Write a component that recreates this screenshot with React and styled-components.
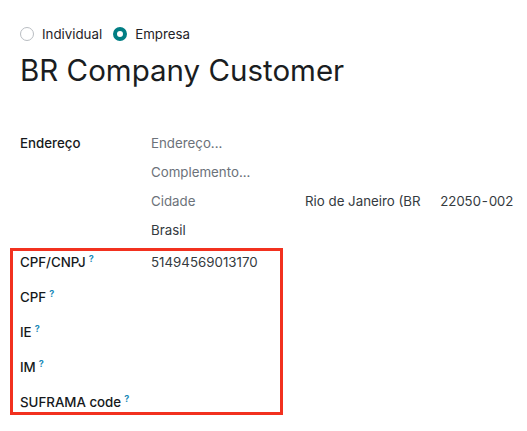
import React from "react";
import styled, { createGlobalStyle } from "styled-components";

const Global = createGlobalStyle`
  html, body { margin: 0; padding: 0; background: #fff; }
  body {
    font-family: "Inter Variable", "Inter", "Noto Sans", sans-serif;
    font-size: 13.3px;
    color: #1f2328;
  }
`;

const Page = styled.div`
  padding: 24px 0 0 20px;
  width: 507px;
  box-sizing: border-box;
`;

const RadioGroup = styled.div`
  display: flex;
  align-items: center;
  height: 20px;
  line-height: 20px;
  gap: 11px;
`;

const RadioOption = styled.label`
  display: flex;
  align-items: center;
  gap: 8px;
  color: #1f2328;
`;

const RadioDot = styled.span`
  width: 14px;
  height: 14px;
  border-radius: 50%;
  box-sizing: border-box;
  display: inline-block;
  border: ${(p) => (p.$checked ? "4px solid #017e84" : "1px solid #b9bdc2")};
  background: #fff;
  margin-top: -1px;
`;

const Title = styled.h1`
  margin: 9px 0 0;
  font-size: 29.5px;
  line-height: 34px;
  font-weight: 400;
  color: #1a1d21;
`;

const AddressGrid = styled.div`
  margin-top: 42px;
  display: grid;
  grid-template-columns: 131px 154px 135px 1fr;
  grid-auto-rows: 29px;
  line-height: 29px;
`;

const Label = styled.div`
  font-weight: 460;
  color: #16191c;
  white-space: nowrap;
`;

const Value = styled.div`
  grid-column: ${(p) => p.$col || "auto"};
  color: ${(p) => (p.$muted ? "#6c727a" : "#343a40")};
  white-space: nowrap;
  font-variant-numeric: ${(p) => (p.$tabular ? "tabular-nums" : "normal")};
  letter-spacing: ${(p) => (p.$tabular ? "-0.5px" : "normal")};
`;

const Highlight = styled.div`
  margin: 3px 0 0 -10px;
  width: 273px;
  box-sizing: border-box;
  border: 3px solid #f2311f;
  padding: 1px 0 0 7px;
`;

const FieldRow = styled.div`
  display: grid;
  grid-template-columns: 131px 1fr;
  height: ${(p) => (p.$last ? "20px" : "35px")};
  line-height: 20px;
`;

const Help = styled.sup`
  color: #1b8ab8;
  font-size: 9px;
  font-weight: 700;
  margin-left: 3px;
  vertical-align: top;
  position: relative;
  top: -3px;
`;

const fields = [
  ["CPF/CNPJ", "51494569013170"],
  ["CPF", ""],
  ["IE", ""],
  ["IM", ""],
  ["SUFRAMA code", ""],
];

export default function App() {
  return (
    <>
      <Global />
      <Page>
        <RadioGroup>
          <RadioOption>
            <RadioDot />
            Individual
          </RadioOption>
          <RadioOption>
            <RadioDot $checked />
            Empresa
          </RadioOption>
        </RadioGroup>
        <Title>BR Company Customer</Title>
        <AddressGrid>
          <Label>Endereço</Label>
          <Value $muted $col="2 / 5">Endereço...</Value>
          <Value $muted $col="2 / 5">Complemento...</Value>
          <Value $muted $col="2">Cidade</Value>
          <Value>Rio de Janeiro (BR</Value>
          <Value $tabular>22050-002</Value>
          <Value $col="2 / 5">Brasil</Value>
        </AddressGrid>
        <Highlight>
          {fields.map(([label, value], i) => (
            <FieldRow key={label} $last={i === fields.length - 1}>
              <Label>
                {label}
                <Help>?</Help>
              </Label>
              <Value>{value}</Value>
            </FieldRow>
          ))}
        </Highlight>
      </Page>
    </>
  );
}
